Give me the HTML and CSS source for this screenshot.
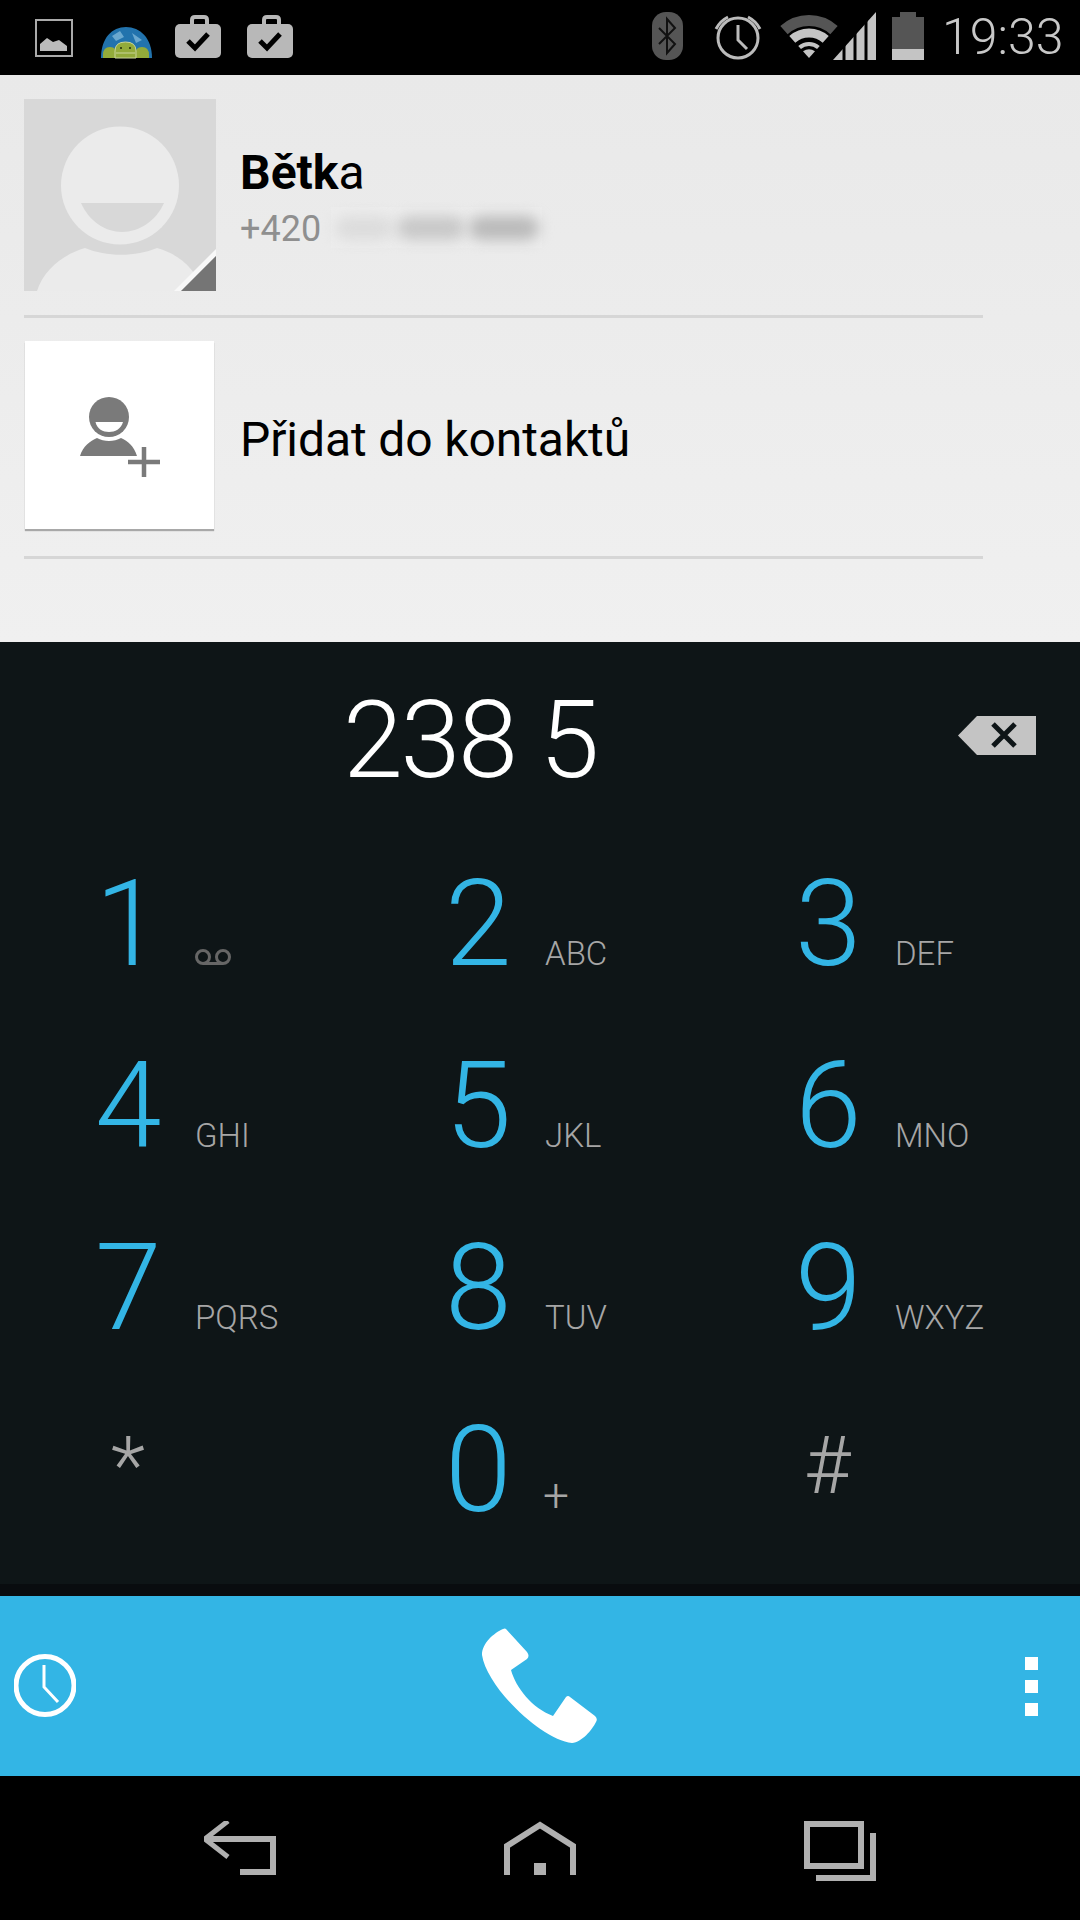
FILE: index.html
```html
<!DOCTYPE html>
<html>
<head>
    <title>Dialer</title>
    <link rel="stylesheet" href="styles.css">
</head>
<body>
    <!-- Status bar, svg viewBoxes use page x so icons are easy to compare -->
    <div class="status-bar">
        <svg class="ic-picture" viewBox="35 0 38 75">
            <rect x="36" y="20" width="36" height="36" fill="none" stroke="#aaa" stroke-width="2"/>
            <path d="M40 51V44L47 38L53 42L59 40L67 46V51Z" fill="#bbb"/>
        </svg>
        <svg class="ic-globe" viewBox="100 0 52 75">
            <path d="M101 58C101 38 112 27 126 27C140 27 152 38 152 58Z" fill="#2273ad"/>
            <path d="M112 36L120 31L124 37L116 41ZM132 33L142 40L136 43Z" fill="#6aa8cf"/>
            <path d="M103 58V55Q103 47 110 47Q117 47 117 55V58ZM135 58V55Q135 47 142 47Q149 47 149 55V58Z" fill="#93ab3a"/>
            <path d="M115 58V51Q115 42 125.500 42Q136 42 136 51V58Z" fill="#93ab3a" stroke="#c9d59a" stroke-width="1"/>
            <path d="M116 53H135" stroke="#c9d59a" stroke-width="1"/>
            <rect x="120" y="47" width="2" height="2" fill="#3c4a14"/>
            <rect x="129" y="47" width="2" height="2" fill="#3c4a14"/>
        </svg>
        <svg class="ic-case" viewBox="175 0 46 75">
            <path d="M192 24V20Q192 17 195 17H204Q207 17 207 20V24" fill="none" stroke="#b8b8b8" stroke-width="4"/>
            <rect x="175" y="24" width="46" height="34" rx="5" fill="#b8b8b8"/>
            <path d="M188 41L195 48L208 34" fill="none" stroke="#000" stroke-width="5"/>
        </svg>
        <svg class="ic-case" viewBox="175 0 46 75">
            <path d="M192 24V20Q192 17 195 17H204Q207 17 207 20V24" fill="none" stroke="#b8b8b8" stroke-width="4"/>
            <rect x="175" y="24" width="46" height="34" rx="5" fill="#b8b8b8"/>
            <path d="M188 41L195 48L208 34" fill="none" stroke="#000" stroke-width="5"/>
        </svg>
        <div class="status-right">
            <svg class="ic-bt" viewBox="652 0 31 75">
                <rect x="652" y="12" width="31" height="48" rx="14" fill="#555"/>
                <path d="M659 28L675 44L667 53V19L675 28L659 44" fill="none" stroke="#111" stroke-width="2"/>
            </svg>
            <svg class="ic-alarm" viewBox="714 0 48 75">
                <circle cx="738" cy="38" r="20" fill="none" stroke="#bbb" stroke-width="3"/>
                <path d="M738 25V40L747 49" fill="none" stroke="#bbb" stroke-width="3"/>
                <path d="M716 29Q720 21 728 17M748 17Q756 21 760 29" fill="none" stroke="#bbb" stroke-width="3"/>
            </svg>
            <svg class="ic-signal" viewBox="780 0 96 75">
                <path d="M784 30.1A37.5 37.5 0 0 1 834 30.1" fill="none" stroke="#555" stroke-width="11"/>
                <path d="M792.3 39.4A25 25 0 0 1 825.7 39.4" fill="none" stroke="#c4c4c4" stroke-width="9"/>
                <path d="M799.6 47.6A14 14 0 0 1 818.4 47.6" fill="none" stroke="#c4c4c4" stroke-width="4"/>
                <path d="M809 58L803 51.3Q809 47 815 51.3Z" fill="#c4c4c4"/>
                <path d="M833 60L876 12V60Z" fill="#c4c4c4"/>
                <path d="M844 10V62M855 10V62M866 10V62" stroke="#000" stroke-width="3"/>
            </svg>
            <svg class="ic-battery" viewBox="892 0 32 75">
                <rect x="900" y="12" width="16" height="6" fill="#555"/>
                <rect x="892" y="17" width="32" height="32" fill="#555"/>
                <rect x="892" y="49" width="32" height="11" fill="#c4c4c4"/>
            </svg>
            <span class="clock-text">19:33</span>
        </div>
    </div>

    <div class="contact-panel">
        <div class="contact-row">
            <svg class="avatar" viewBox="0 0 192 192">
                <rect width="192" height="192" fill="#d8d8d8"/>
                <circle cx="96" cy="86.5" r="59" fill="#ebebeb"/>
                <path d="M57 104H140C132 122 115 133 98 133C81 133 65 122 57 104Z" fill="#d8d8d8"/>
                <path d="M13 192C20 170 40 155 61 149C82 158 112 158 133 149C155 155 172 170 179 192Z" fill="#ebebeb"/>
                <path d="M192 150V157L157 192H150Z" fill="#f8f8f8"/>
                <path d="M192 157V192H157Z" fill="#757575"/>
            </svg>
            <div class="contact-info">
                <div class="contact-name"><b>Bětk</b>a</div>
                <div class="contact-phone">
                    <span>+420</span>
                    <div class="blurred">
                        <div class="blob blob-1"></div>
                        <div class="blob blob-2"></div>
                        <div class="blob blob-3"></div>
                    </div>
                </div>
            </div>
        </div>
        <div class="divider"></div>
        <div class="add-row">
            <div class="add-card">
                <svg class="add-icon" viewBox="80 397 80 80">
                    <ellipse cx="109" cy="417" rx="20" ry="20" fill="#7a7a7a"/>
                    <path d="M95.5 422H123C121 429 115 432 109 432C103 432 97 429 95.5 422Z" fill="#fff"/>
                    <path d="M80 456C83 446 90 441 97 438C104 442 114 442 121 438C128 441 134 446 137 456Z" fill="#7a7a7a"/>
                    <path d="M144 447V477M128 462H160" stroke="#7a7a7a" stroke-width="4.5" fill="none"/>
                </svg>
            </div>
            <div class="add-text">Přidat do kontaktů</div>
        </div>
        <div class="divider divider-last"></div>
    </div>

    <div class="dialer">
        <div class="number-row">
            <div class="number-text">238 5</div>
            <svg class="backspace" viewBox="958 716 78 39">
                <path d="M977 716H1036V755H977L958 735.5Z" fill="#c4c4c4"/>
                <path d="M993 724L1015 746M1015 724L993 746" stroke="#0e1517" stroke-width="5"/>
            </svg>
        </div>
        <div class="keypad">
            <div class="key">
                <span class="digit">1</span>
                <svg class="voicemail" viewBox="0 0 36 16">
                    <circle cx="8" cy="8" r="6.5" fill="none" stroke="#666" stroke-width="3"/>
                    <circle cx="28" cy="8" r="6.5" fill="none" stroke="#666" stroke-width="3"/>
                    <path d="M8 14.5H28" stroke="#666" stroke-width="3"/>
                </svg>
            </div>
            <div class="key"><span class="digit">2</span><span class="letters">ABC</span></div>
            <div class="key"><span class="digit">3</span><span class="letters">DEF</span></div>
            <div class="key"><span class="digit">4</span><span class="letters">GHI</span></div>
            <div class="key"><span class="digit">5</span><span class="letters">JKL</span></div>
            <div class="key"><span class="digit">6</span><span class="letters">MNO</span></div>
            <div class="key"><span class="digit">7</span><span class="letters">PQRS</span></div>
            <div class="key"><span class="digit">8</span><span class="letters">TUV</span></div>
            <div class="key"><span class="digit">9</span><span class="letters">WXYZ</span></div>
            <div class="key"><span class="symbol star">*</span></div>
            <div class="key"><span class="digit">0</span><span class="letters plus">+</span></div>
            <div class="key"><span class="symbol hash">#</span></div>
        </div>
    </div>
    <div class="dialer-strip"></div>

    <div class="action-bar">
        <svg class="ic-history" viewBox="14 1654 62 63">
            <circle cx="45" cy="1685.5" r="29" fill="none" stroke="#fff" stroke-width="5"/>
            <path d="M44 1665V1687L58 1702" fill="none" stroke="#fff" stroke-width="3"/>
        </svg>
        <svg class="ic-phone" viewBox="0 0 116 116">
            <path d="M24 1L45 24Q48 28 45 31L29 42C34 60 50 80 71 88L84 69Q86 67 88 69L113 88Q116 91 114 94C110 102 100 114 90 115C60 112 5 60 0 27C0 15 12 5 21 1Q23 0 24 1Z" fill="#fff"/>
        </svg>
        <div class="overflow-dots">
            <div class="dot"></div>
            <div class="dot"></div>
            <div class="dot"></div>
        </div>
    </div>

    <div class="nav-bar">
        <svg class="ic-back" viewBox="204 1821 72 54">
            <path d="M228 1821L205 1839L228 1857" fill="none" stroke="#b0b0b0" stroke-width="5"/>
            <path d="M208 1839H273V1872H240" fill="none" stroke="#b0b0b0" stroke-width="6"/>
        </svg>
        <svg class="ic-home" viewBox="504 1821 72 54">
            <path d="M507 1875V1846L540 1825L573 1846V1875" fill="none" stroke="#b0b0b0" stroke-width="6"/>
            <rect x="534" y="1863" width="12" height="12" fill="#b0b0b0"/>
        </svg>
        <svg class="ic-recents" viewBox="804 1821 72 60">
            <rect x="807" y="1824" width="54" height="42" fill="none" stroke="#b0b0b0" stroke-width="6"/>
            <path d="M873 1833V1878H816" fill="none" stroke="#b0b0b0" stroke-width="6"/>
        </svg>
    </div>
</body>
</html>
```
FILE: styles.css
```css
body {
    margin: 0;
    width: 1080px;
    height: 1920px;
    overflow: hidden;
    background-color: #000;
    font-family: 'Roboto', sans-serif;
}

svg {
    display: block;
    flex-shrink: 0;
}

/* status bar */
.status-bar {
    display: flex;
    height: 75px;
    padding-left: 35px;
    background-color: #000;
}

.status-bar svg {
    height: 75px;
}

.ic-picture { width: 38px; margin-right: 27px; }
.ic-globe { width: 52px; margin-right: 23px; }
.ic-case { width: 46px; margin-right: 26px; }

.status-right {
    display: flex;
    position: absolute;
    top: 0;
    left: 652px;
}

.ic-bt { width: 31px; margin-right: 31px; }
.ic-alarm { width: 48px; margin-right: 18px; }
.ic-signal { width: 96px; margin-right: 16px; }
.ic-battery { width: 32px; margin-right: 18px; }

.clock-text {
    font-size: 50px;
    font-weight: 300;
    line-height: 75px;
    color: #c8c8c8;
}

/* contact suggestions */
.contact-panel {
    height: 567px;
    box-sizing: border-box;
    padding: 24px 97px 0 24px;
    background: linear-gradient(#e9e9e9, #f0f0f0);
}

.contact-row {
    display: flex;
    gap: 24px;
    height: 192px;
}

.avatar {
    width: 192px;
    height: 192px;
}

.contact-info {
    padding-top: 46px;
}

.contact-name {
    font-size: 48px;
    line-height: 56px;
    color: #000;
}

.contact-phone {
    display: flex;
    margin-top: 6px;
    font-size: 36px;
    line-height: 44px;
    color: #8f8f8f;
}

.blurred {
    display: flex;
    align-items: center;
    gap: 4px;
    width: 211px;
    height: 41px;
    margin-left: 10px;
    box-sizing: border-box;
    padding-left: 4px;
    background-color: #ededed;
}

.blob {
    height: 24px;
    border-radius: 12px;
    filter: blur(7px);
}

.blob-1 { width: 58px; background-color: #dcdcdc; }
.blob-2 { width: 68px; background-color: #c8c8c8; }
.blob-3 { width: 70px; background-color: #bababa; }

.divider {
    height: 3px;
    margin-top: 24px;
    background-color: #d6d6d6;
}

.divider-last {
    margin-top: 27px;
}

.add-row {
    display: flex;
    align-items: center;
    gap: 26px;
    margin: 23px 0 0 1px;
}

.add-card {
    display: flex;
    width: 189px;
    height: 188px;
    background-color: #fff;
    box-shadow: 0 2px 1px #a8a8a8;
}

.add-icon {
    width: 80px;
    height: 80px;
    margin: 56px 0 0 55px;
}

.add-text {
    padding-top: 8px;
    font-size: 48px;
    letter-spacing: -0.1px;
    color: #000;
}

/* dial pad */
.dialer {
    height: 942px;
    background-color: #0e1517;
}

.number-row {
    display: flex;
    height: 191px;
}

.number-text {
    width: 958px;
    padding: 38px 0 0 343px;
    box-sizing: border-box;
    font-size: 108px;
    font-weight: 300;
    letter-spacing: -2.4px;
    line-height: 120px;
    color: #fff;
}

.backspace {
    width: 78px;
    height: 39px;
    margin-top: 74px;
}

.keypad {
    display: grid;
    grid-template-columns: repeat(3, 350px);
    grid-auto-rows: 182px;
}

.key {
    display: flex;
    align-items: baseline;
    padding-left: 95px;
}

.digit {
    width: 100px;
    font-size: 120px;
    font-weight: 300;
    line-height: 182px;
    color: #33b5e5;
}

.letters {
    font-size: 33px;
    font-weight: 300;
    color: #a6a6a6;
}

.plus {
    margin-left: -2px;
    font-size: 46px;
}

.voicemail {
    width: 36px;
    height: 16px;
    align-self: flex-start;
    margin-top: 116px;
}

.symbol {
    font-size: 80px;
    font-weight: 300;
    line-height: 175px;
    color: #a6a6a6;
}

.star { padding-left: 16px; }
.hash { padding-left: 9px; }

.dialer-strip {
    height: 12px;
    background-color: #090c0f;
}

/* call button bar */
.action-bar {
    position: relative;
    height: 180px;
    background-color: #33b5e5;
}

.ic-history {
    position: absolute;
    top: 58px;
    left: 14px;
    width: 62px;
    height: 63px;
}

.ic-phone {
    position: absolute;
    top: 32px;
    left: 482px;
    width: 116px;
    height: 116px;
}

.overflow-dots {
    position: absolute;
    top: 61px;
    left: 1025px;
    display: flex;
    flex-direction: column;
    gap: 10px;
}

.dot {
    width: 13px;
    height: 13px;
    background-color: #fff;
}

/* nav bar */
.nav-bar {
    position: relative;
    height: 144px;
}

.ic-back, .ic-home, .ic-recents {
    position: absolute;
    top: 45px;
    width: 72px;
}

.ic-back { left: 204px; height: 54px; }
.ic-home { left: 504px; height: 54px; }
.ic-recents { left: 804px; height: 60px; }
```
